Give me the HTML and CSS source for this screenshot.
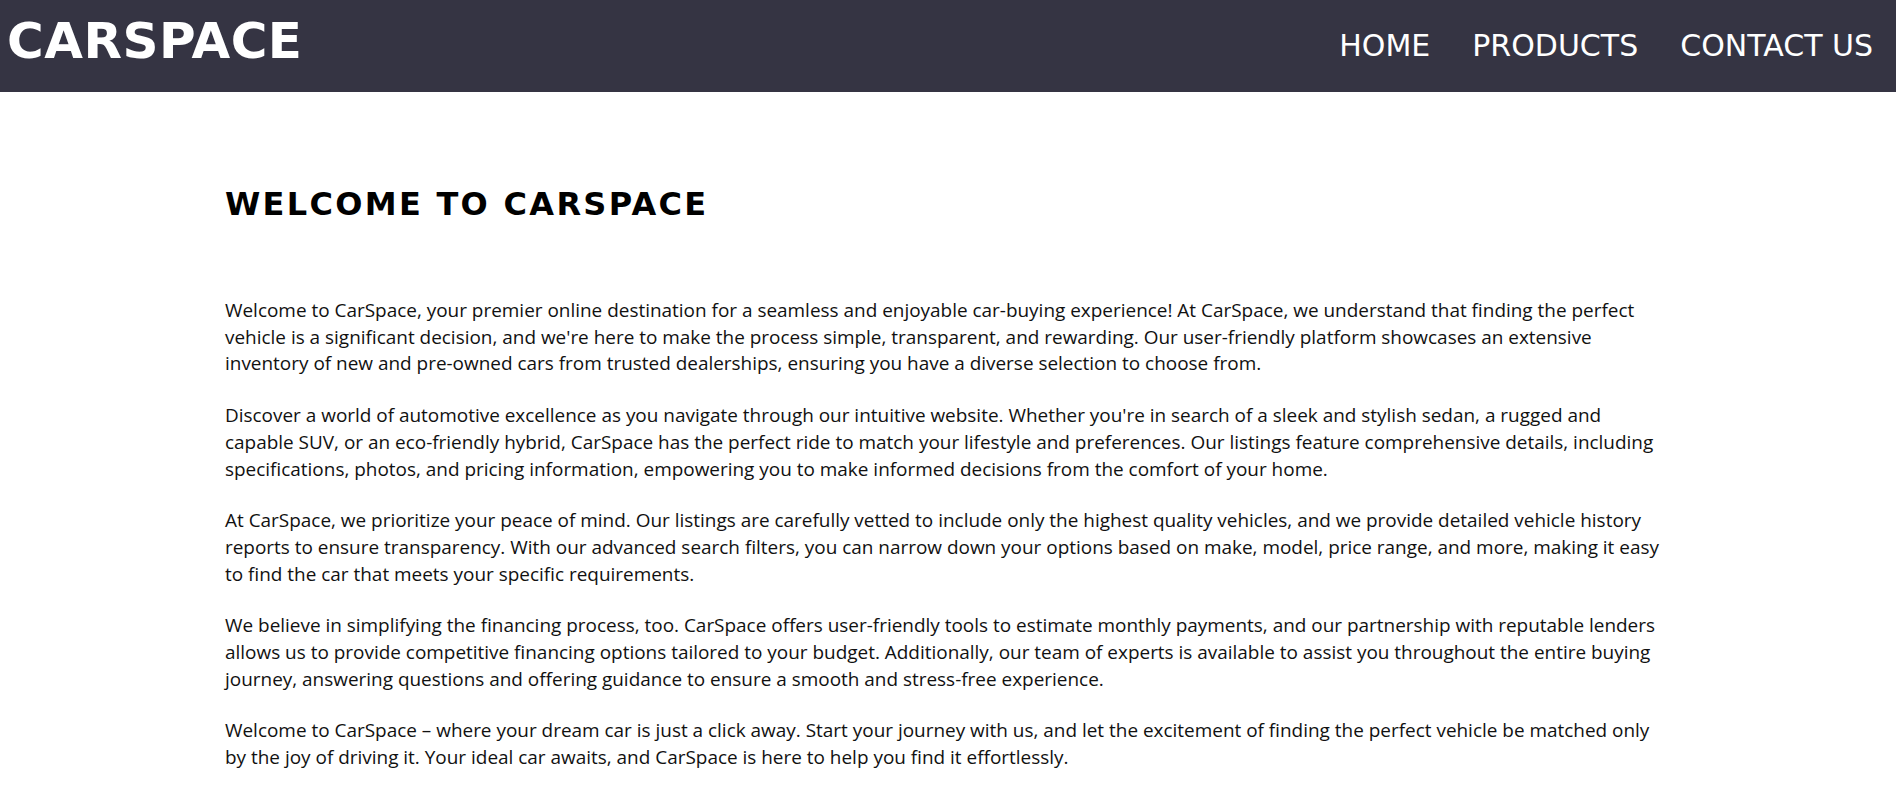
FILE: index.html
```html
<!DOCTYPE html>
<html lang="en">
<head>
<meta charset="utf-8">
<title>CarSpace</title>
<link rel="stylesheet" href="styles.css">
</head>
<body>
<header class="site-header">
  <div class="logo">CARSPACE</div>
  <nav class="nav">
    <a class="nav-link" href="#">HOME</a>
    <a class="nav-link" href="#">PRODUCTS</a>
    <a class="nav-link" href="#">CONTACT US</a>
  </nav>
</header>
<main class="content">
  <h1 class="title">WELCOME TO CARSPACE</h1>
  <p class="text">Welcome to CarSpace, your premier online destination for a seamless and enjoyable car-buying experience! At CarSpace, we understand that finding the perfect vehicle is a significant decision, and we're here to make the process simple, transparent, and rewarding. Our user-friendly platform showcases an extensive inventory of new and pre-owned cars from trusted dealerships, ensuring you have a diverse selection to choose from.</p>
  <p class="text">Discover a world of automotive excellence as you navigate through our intuitive website. Whether you're in search of a sleek and stylish sedan, a rugged and capable SUV, or an eco-friendly hybrid, CarSpace has the perfect ride to match your lifestyle and preferences. Our listings feature comprehensive details, including specifications, photos, and pricing information, empowering you to make informed decisions from the comfort of your home.</p>
  <p class="text">At CarSpace, we prioritize your peace of mind. Our listings are carefully vetted to include only the highest quality vehicles, and we provide detailed vehicle history reports to ensure transparency. With our advanced search filters, you can narrow down your options based on make, model, price range, and more, making it easy to find the car that meets your specific requirements.</p>
  <p class="text">We believe in simplifying the financing process, too. CarSpace offers user-friendly tools to estimate monthly payments, and our partnership with reputable lenders allows us to provide competitive financing options tailored to your budget. Additionally, our team of experts is available to assist you throughout the entire buying journey, answering questions and offering guidance to ensure a smooth and stress-free experience.</p>
  <p class="text">Welcome to CarSpace – where your dream car is just a click away. Start your journey with us, and let the excitement of finding the perfect vehicle be matched only by the joy of driving it. Your ideal car awaits, and CarSpace is here to help you find it effortlessly.</p>
</main>
</body>
</html>
```

FILE: styles.css
```css
html, body {
  margin: 0;
  padding: 0;
  background: #ffffff;
}

body {
  font-family: "DejaVu Sans", Verdana, sans-serif;
  color: #000;
}

.site-header {
  display: flex;
  justify-content: space-between;
  align-items: flex-start;
  height: 92px;
  background: #353443;
  color: #ffffff;
}

.logo {
  margin: 12px 0 0 7px;
  font-family: "DejaVu Sans", Verdana, sans-serif;
  font-weight: bold;
  font-size: 50px;
  letter-spacing: 0.5px;
  line-height: normal;
}

.nav {
  display: flex;
  gap: 42px;
  margin: 28px 23px 0 0;
}

.nav-link {
  font-family: "DejaVu Sans", Verdana, sans-serif;
  font-size: 30px;
  line-height: normal;
  color: #ffffff;
  text-decoration: none;
}

.content {
  max-width: 1446px;
  margin: 0 auto;
  padding-bottom: 20px;
}

.title {
  margin: 93px 0 74px;
  font-family: "DejaVu Sans", Verdana, sans-serif;
  font-weight: bold;
  font-size: 32px;
  letter-spacing: 2.3px;
  line-height: normal;
}

.text {
  margin: 0 0 25px;
  font-family: "Open Sans", "Noto Sans", sans-serif;
  font-size: 18.95px;
  line-height: 26.7px;
  color: #111;
}
```
